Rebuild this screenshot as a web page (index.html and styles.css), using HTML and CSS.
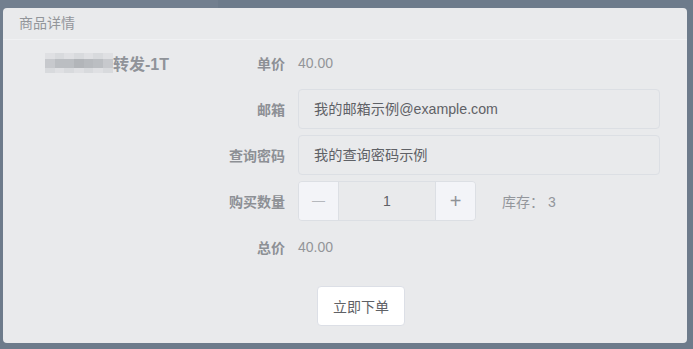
FILE: index.html
```html
<!DOCTYPE html>
<html lang="zh-CN">
<head>
    <meta charset="UTF-8">
    <meta name="viewport" content="width=device-width, initial-scale=1.0">
    <title>商品详情</title>
    <link rel="stylesheet" href="styles.css">
</head>
<body>
    <div class="glare"></div>
    <div class="card">
        <div class="card-header">商品详情</div>
        <div class="card-body">
            <div class="goods">
                <div class="mosaic">
                    <span class="m1"></span><span class="m2"></span><span class="m1"></span><span class="m2"></span><span class="m1"></span><span class="m2"></span><span class="m1"></span>
                    <span class="m3"></span><span class="m4"></span><span class="m4"></span><span class="m5"></span><span class="m6"></span><span class="m4"></span><span class="m3"></span>
                    <span class="m2"></span><span class="m1"></span><span class="m2"></span><span class="m1"></span><span class="m2"></span><span class="m1"></span><span class="m2"></span>
                </div>
                <span class="goods-name">转发-1T</span>
            </div>
            <div class="form">
                <div class="row">
                    <label class="label">单价</label>
                    <span class="value">40.00</span>
                </div>
                <div class="row">
                    <label class="label">邮箱</label>
                    <div class="input">我的邮箱示例@example.com</div>
                </div>
                <div class="row">
                    <label class="label">查询密码</label>
                    <div class="input">我的查询密码示例</div>
                </div>
                <div class="row">
                    <label class="label">购买数量</label>
                    <div class="number">
                        <span class="num-btn minus">&#8212;</span>
                        <span class="num-val">1</span>
                        <span class="num-btn plus">+</span>
                    </div>
                    <span class="stock">库存：&nbsp;3</span>
                </div>
                <div class="row">
                    <label class="label">总价</label>
                    <span class="value">40.00</span>
                </div>
                <div class="actions">
                    <button class="btn">立即下单</button>
                </div>
            </div>
        </div>
    </div>
</body>
</html>
```

FILE: styles.css
```css
body {
    margin: 0;
    padding: 8px 6px 6px 3px;
    background-color: #6d7b8b;
    font-family: "Liberation Sans", "Noto Sans CJK SC", sans-serif;
    font-size: 14px;
}
.glare {
    position: absolute;
    left: 0;
    top: 0;
    width: 218px;
    height: 30px;
    background-color: rgba(255, 255, 255, 0.035);
}
.card {
    background-color: #e9eaec;
    border-radius: 4px;
    height: 335px;
    box-sizing: border-box;
}
.card-header {
    height: 32px;
    line-height: 30px;
    padding-left: 16px;
    color: #8f9297;
    border-bottom: 1px solid #f0f1f3;
    box-sizing: border-box;
}
.card-body {
    display: flex;
    padding-top: 3px;
}
.goods {
    width: 155px;
    padding-left: 42px;
    height: 40px;
    display: flex;
    align-items: center;
}
.mosaic {
    display: grid;
    grid-template-columns: repeat(7, 9.7px);
    grid-template-rows: 6px 9px 5px;
    width: 68px;
}
.m1 { background-color: #dfe0e3; }
.m2 { background-color: #d8dadd; }
.m3 { background-color: #c7c9cd; }
.m4 { background-color: #bbbec2; }
.m5 { background-color: #b2b5b9; }
.m6 { background-color: #b7babe; }
.goods-name {
    font-size: 16px;
    font-weight: bold;
    color: #909399;
}
.form {
    flex: 1;
}
.row {
    display: flex;
    align-items: center;
    height: 40px;
    margin-bottom: 6px;
}
.label {
    width: 98px;
    padding-right: 13px;
    box-sizing: border-box;
    text-align: right;
    font-weight: bold;
    color: #8d9095;
}
.value {
    color: #939599;
}
.input {
    width: 362px;
    height: 40px;
    box-sizing: border-box;
    border: 1px solid #dcdfe4;
    border-radius: 4px;
    padding-left: 15px;
    line-height: 38px;
    color: #5f6166;
    font-size: 14.2px;
}
.number {
    display: flex;
    width: 178px;
    height: 40px;
    box-sizing: border-box;
    border: 1px solid #dcdfe4;
    border-radius: 4px;
    overflow: hidden;
}
.num-btn {
    width: 39px;
    background-color: #f3f4f8;
    color: #8f9297;
    text-align: center;
    line-height: 38px;
    font-size: 18px;
}
.minus {
    border-right: 1px solid #dcdfe4;
    font-size: 13px;
    color: #b5b8bd;
}
.plus {
    border-left: 1px solid #dcdfe4;
    font-size: 20px;
    font-weight: 300;
}
.num-val {
    flex: 1;
    text-align: center;
    line-height: 38px;
    color: #5f6166;
}
.stock {
    margin-left: 26px;
    color: #93969b;
}
.actions {
    padding-top: 13px;
    padding-left: 117px;
}
.btn {
    width: 88px;
    height: 40px;
    background-color: #fff;
    border: 1px solid #dcdfe6;
    border-radius: 4px;
    font-family: "Liberation Sans", "Noto Sans CJK SC", sans-serif;
    font-size: 14px;
    color: #5f6166;
}
```
